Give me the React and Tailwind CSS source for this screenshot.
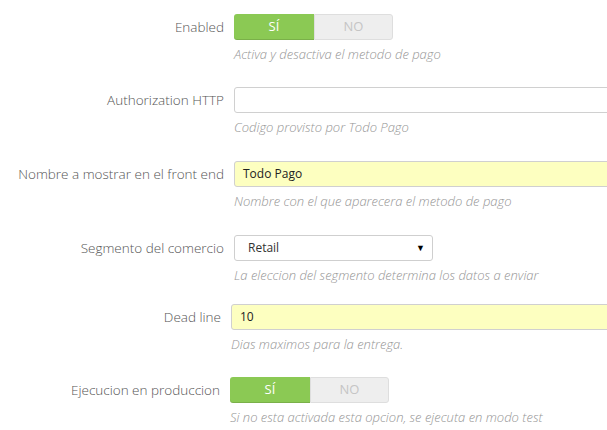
const Switch = () => (
  <div className="flex h-[26px] w-[159px] text-[13px]">
    <div className="flex w-[80px] items-center justify-center rounded-l-[3px] bg-[#8bc954] text-white shadow-[inset_0_-1px_0_rgba(0,0,0,0.12)]">
      SÍ
    </div>
    <div className="flex w-[79px] items-center justify-center rounded-r-[3px] border border-[#dedede] bg-[#eeeeee] text-[#c5c5c5]">
      NO
    </div>
  </div>
)

const TextInput = ({ value, filled }) => (
  <div
    className={`flex h-[26px] w-[420px] items-center rounded-[3px] border border-[#d0d0d0] px-[8px] text-[12px] text-[#222] ${
      filled ? 'bg-[#fdffc0]' : 'bg-white'
    }`}
  >
    {value}
  </div>
)

const Select = () => (
  <div className="flex h-[26px] w-[199px] items-center justify-between rounded-[3px] border border-[#cfcfcf] bg-white pl-[13px] pr-[7px] text-[12px] text-[#333]">
    <span>Retail</span>
    <span className="text-[9px] text-black">▼</span>
  </div>
)

const Row = ({ label, help, labelWidth = 'w-[225px]', height, children }) => (
  <div className={`flex ${height}`}>
    <div className={`${labelWidth} shrink-0 whitespace-nowrap pr-[1px] text-right text-[13.5px] font-light leading-[26px] text-[#555]`}>
      {label}
    </div>
    <div className="ml-[9px]">
      {children}
      <p className="mt-[6px] whitespace-nowrap text-[13px] font-light italic leading-[16px] text-[#959595]">{help}</p>
    </div>
  </div>
)

export default function App() {
  return (
    <div className="h-[430px] w-[607px] overflow-hidden bg-white pt-[14px] font-['Open_Sans',sans-serif]">
      <Row label="Enabled" help="Activa y desactiva el metodo de pago" height="h-[73px]">
        <Switch />
      </Row>
      <Row label="Authorization HTTP" help="Codigo provisto por Todo Pago" height="h-[74px]">
        <TextInput value="" />
      </Row>
      <Row label="Nombre a mostrar en el front end" help="Nombre con el que aparecera el metodo de pago" height="h-[74px]">
        <TextInput value="Todo Pago" filled />
      </Row>
      <Row label="Segmento del comercio" help="La eleccion del segmento determina los datos a enviar" height="h-[69px]">
        <Select />
      </Row>
      <Row label="Dead line" help="Dias maximos para la entrega." labelWidth="w-[222px]" height="h-[73px]">
        <TextInput value="10" filled />
      </Row>
      <Row label="Ejecucion en produccion" help="Si no esta activada esta opcion, se ejecuta en modo test" labelWidth="w-[221px]">
        <Switch />
      </Row>
    </div>
  )
}
